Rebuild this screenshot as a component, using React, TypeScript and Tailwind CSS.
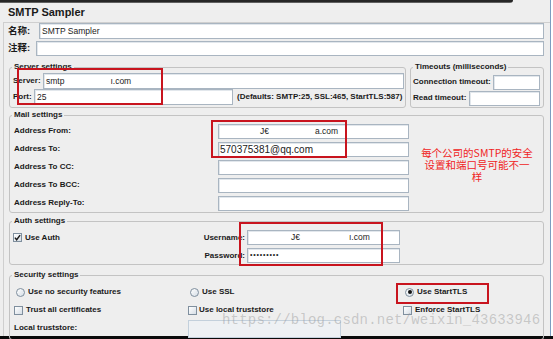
import React from 'react';

function Field({ className, children }: { className: string; children?: React.ReactNode }) {
  return (
    <div className={`flex items-center overflow-hidden whitespace-nowrap border border-[#a9b5c1] bg-white pl-[2px] font-normal text-[#222] shadow-[inset_1px_1px_0_#e2e7ec] ${className}`}>
      {children}
    </div>
  );
}

function Check({ checked }: { checked?: boolean }) {
  return (
    <span className="flex h-[9px] w-[9px] shrink-0 items-center justify-center border border-[#7f8f9e] bg-gradient-to-br from-white to-[#d6dee6]">
      {checked && (
        <svg viewBox="0 0 8 8" className="h-[7px] w-[7px]">
          <path d="M1 4.2 L3 6.6 L7 1.2" fill="none" stroke="#1a1a1a" strokeWidth="1.6" />
        </svg>
      )}
    </span>
  );
}

function Radio({ on }: { on?: boolean }) {
  return (
    <span className="flex h-[9px] w-[9px] shrink-0 items-center justify-center rounded-full border border-[#7f8f9e] bg-gradient-to-br from-white to-[#d6dee6]">
      {on && <span className="h-[4px] w-[4px] rounded-full bg-[#111]" />}
    </span>
  );
}

function Legend({ children }: { children: React.ReactNode }) {
  return <legend className="ml-[2px] px-[2px] text-[8px] leading-[10px]">{children}</legend>;
}

const fs = 'rounded-[3px] border border-[#c3c3c3] min-w-0';

export default function App() {
  return (
    <div className="flex h-[339px] w-[553px] flex-col overflow-hidden bg-white font-['Liberation_Sans',Arial,sans-serif] text-[8px] font-bold text-[#1a1a1a]">
      <div className="flex h-[336px]">
        <div className="relative h-[336px] w-[550px] bg-[#eeeeee]">
          <div className="absolute left-0 top-0 h-[3px] w-[513px] rounded-br-[4px] bg-[linear-gradient(#262626,#262626_60%,#8a8a8a)]" />

          <div className="h-[22px] pl-[8px] pt-[5px] text-[11px] leading-[14px]">SMTP Sampler</div>

          <div className="ml-[3px] h-[314px] border-l border-t border-[#cfcfcf] pr-[6px]">
            {/* name / comment */}
            <div className="flex h-[16px] items-center pl-[4px]">
              <div className="w-[31px] font-['Liberation_Sans','Noto_Sans_CJK_SC',sans-serif] text-[9.5px]">名称:</div>
              <Field className="h-[16px] flex-1 text-[8.5px]">SMTP Sampler</Field>
            </div>
            <div className="mt-[2px] flex h-[15px] items-center pl-[4px]">
              <div className="w-[28px] font-['Liberation_Sans','Noto_Sans_CJK_SC',sans-serif] text-[9.5px]">注释:</div>
              <Field className="h-[15px] flex-1 text-[8.5px]" />
            </div>

            <div className="flex flex-col pl-[5px]">
              {/* server + timeouts */}
              <div className="mt-[6px] flex gap-[4px]">
                <fieldset className={`w-[397px] ${fs}`}>
                  <Legend>Server settings</Legend>
                  <div className="pb-[2px] pl-[3px] pt-[1px]">
                    <div className="flex h-[16px] items-center">
                      <div className="w-[30px]">Server:</div>
                      <Field className="h-[16px] w-[361px] text-[8.5px]">
                        <span>smtp</span>
                        <span className="ml-[46px]">ı.com</span>
                      </Field>
                    </div>
                    <div className="flex h-[16px] items-center">
                      <div className="w-[21px]">Port:</div>
                      <Field className="h-[16px] w-[199px] text-[8.5px]">25</Field>
                      <span className="ml-[4px] whitespace-nowrap">(Defaults: SMTP:25, SSL:465, StartTLS:587)</span>
                    </div>
                  </div>
                </fieldset>
                <fieldset className={`w-[134px] ${fs}`}>
                  <Legend>Timeouts (milliseconds)</Legend>
                  <div className="pl-[2px] pt-[2px]">
                    <div className="flex h-[16px] items-center">
                      <div className="w-[80px] whitespace-nowrap">Connection timeout:</div>
                      <Field className="h-[15px] w-[47px]" />
                    </div>
                    <div className="flex h-[16px] items-center">
                      <div className="w-[56px] whitespace-nowrap">Read timeout:</div>
                      <Field className="h-[15px] w-[71px]" />
                    </div>
                  </div>
                </fieldset>
              </div>

              {/* mail */}
              <fieldset className={`mt-[2px] ${fs}`}>
                <Legend>Mail settings</Legend>
                <div className="flex">
                  <div className="pl-[4px] pt-[2px]">
                    {[
                      ['Address From:', 'from'],
                      ['Address To:', 'to'],
                      ['Address To CC:', ''],
                      ['Address To BCC:', ''],
                      ['Address Reply-To:', ''],
                    ].map(([label, kind]) => (
                      <div key={label} className="flex h-[18px] items-center">
                        <div className="w-[204px]">{label}</div>
                        <Field className="h-[15px] w-[191px] text-[8.5px]">
                          {kind === 'from' && (
                            <>
                              <span className="ml-[39px]">J€</span>
                              <span className="ml-[46px]">a.com</span>
                            </>
                          )}
                          {kind === 'to' && <span className="-ml-[1px] text-[10px]">570375381@qq.com</span>}
                        </Field>
                      </div>
                    ))}
                  </div>
                  <div className="flex flex-1 items-center justify-center pb-[3px] pl-[2px] text-center font-['Noto_Sans_CJK_SC',sans-serif] text-[10.5px] font-normal leading-[12px] text-[#f02424]">
                    <div>
                      每个公司的SMTP的安全
                      <br />
                      设置和端口号可能不一
                      <br />样
                    </div>
                  </div>
                </div>
              </fieldset>

              {/* auth */}
              <fieldset className={`mt-[3px] ${fs}`}>
                <Legend>Auth settings</Legend>
                <div className="pb-[1px] pl-[3px] pt-[4px]">
                  <div className="flex h-[15px] items-center">
                    <div className="flex w-[233px] items-center justify-between pr-[1px]">
                      <div className="flex items-center gap-[3px]">
                        <Check checked />
                        <span>Use Auth</span>
                      </div>
                      <span>Username:</span>
                    </div>
                    <Field className="ml-[1px] h-[15px] w-[153px] text-[8.5px]">
                      <span className="ml-[41px]">J€</span>
                      <span className="ml-[49px]">ı.com</span>
                    </Field>
                  </div>
                  <div className="mt-[3px] flex h-[15px] items-center">
                    <div className="flex w-[233px] justify-end pr-[1px]">
                      <span>Password:</span>
                    </div>
                    <Field className="ml-[1px] h-[15px] w-[153px]">
                      <span className="text-[7px] tracking-[0.8px]">•••••••••</span>
                    </Field>
                  </div>
                </div>
              </fieldset>

              {/* security */}
              <fieldset className={`mt-[5px] h-[70px] ${fs}`}>
                <Legend>Security settings</Legend>
                <div className="pl-[4px] pt-[5px]">
                  <div className="grid h-[14px] grid-cols-[174px_213px_1fr] items-center">
                    <div className="flex items-center gap-[3px] pl-[2px]">
                      <Radio />
                      <span>Use no security features</span>
                    </div>
                    <div className="flex items-center gap-[3px] pl-[2px]">
                      <Radio />
                      <span>Use SSL</span>
                    </div>
                    <div className="flex items-center gap-[3px] pl-[4px]">
                      <Radio on />
                      <span>Use StartTLS</span>
                    </div>
                  </div>
                  <div className="mt-[4px] grid h-[14px] grid-cols-[174px_213px_1fr] items-center">
                    <div className="flex items-center gap-[3px]">
                      <Check />
                      <span>Trust all certificates</span>
                    </div>
                    <div className="flex items-center gap-[2px]">
                      <Check />
                      <span>Use local truststore</span>
                    </div>
                    <div className="flex items-center gap-[3px] pl-[2px]">
                      <Check />
                      <span>Enforce StartTLS</span>
                    </div>
                  </div>
                  <div className="mt-[1px] grid h-[18px] grid-cols-[174px_213px_1fr] items-start">
                    <div className="pt-[4px]">Local truststore:</div>
                    <div className="pt-[2px]">
                      <div className="h-[18px] w-[153px] border border-[#c3d0dc] bg-[#eef1f4]" />
                    </div>
                  </div>
                </div>
              </fieldset>
            </div>
          </div>

          {/* annotations */}
          <div className="absolute left-[17px] top-[68px] h-[37px] w-[146px] border-2 border-[#c8141e]" />
          <div className="absolute left-[211px] top-[120px] h-[38px] w-[136px] border-2 border-[#c8141e]" />
          <div className="absolute left-[239px] top-[222px] h-[44px] w-[144px] border-2 border-[#c8141e]" />
          <div className="absolute left-[396px] top-[283px] h-[21px] w-[93px] border-2 border-[#c8141e]" />
          <div className="pointer-events-none absolute left-[222px] top-[311px] whitespace-nowrap font-['Liberation_Mono',monospace] text-[14px] font-normal leading-[18px] tracking-[0.2px] text-[rgba(150,150,150,0.45)]">
            https://blog.csdn.net/weixin_43633946
          </div>
        </div>
        <div className="w-[1px] bg-[#7c9cc0]" />
        <div className="w-[2px] bg-white" />
      </div>
      <div className="h-[3px] bg-[#0a0a0a]" />
    </div>
  );
}
